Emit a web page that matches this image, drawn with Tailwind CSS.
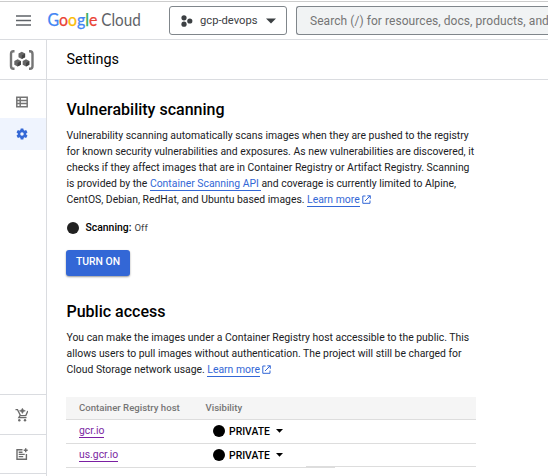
<!DOCTYPE html>
<html lang="en">
<head>
<meta charset="utf-8">
<title>Settings – Container Registry</title>
<script src="https://cdn.jsdelivr.net/npm/@tailwindcss/browser@4"></script>
</head>
<body class="w-[548px] h-[476px] overflow-hidden bg-white font-['Roboto',sans-serif] text-[#202124] text-[10.4px] leading-4 flex flex-col">
<header class="h-[40px] shrink-0 border-b border-[#dadce0] flex flex-col">
  <div class="h-[2px] shrink-0 border-b border-[#cccccc]"></div>
  <div class="flex items-center h-[37px] pl-[16px]">
    <svg class="w-[15px] h-[11px] shrink-0" viewBox="0 0 15 11"><path d="M0 1h15M0 5.500h15M0 10h15" stroke="#5f6368" stroke-width="1.600"/></svg>
    <svg class="ml-[16px] w-[100px] h-[24px] shrink-0" viewBox="0 0 100 24" font-family="Lato, sans-serif" font-size="16.500"><text x="0.500" y="16.500" textLength="50" lengthAdjust="spacingAndGlyphs" stroke-width=".25"><tspan fill="#4285f4" stroke="#4285f4">G</tspan><tspan fill="#ea4335" stroke="#ea4335">o</tspan><tspan fill="#fbbc04" stroke="#fbbc04">o</tspan><tspan fill="#4285f4" stroke="#4285f4">g</tspan><tspan fill="#34a853" stroke="#34a853">l</tspan><tspan fill="#ea4335" stroke="#ea4335">e</tspan></text><text x="54.300" y="16.500" textLength="39.500" lengthAdjust="spacingAndGlyphs" fill="#5f6368">Cloud</text></svg>
    <button class="ml-[22px] w-[118px] h-[29px] shrink-0 rounded-[3px] border border-[#80868b] flex items-center pl-[10.500px] text-[11.2px] text-[#3c4043]">
      <svg class="w-[12px] h-[12px]" viewBox="0 0 12 12" fill="#3c4043"><circle cx="3" cy="2.800" r="2.600"/><circle cx="3" cy="9.200" r="2.600"/><circle cx="8.800" cy="6" r="2.600"/></svg>
      <span class="ml-[7.500px] w-[58px] text-left whitespace-nowrap">gcp-devops</span>
      <svg class="ml-[7.500px] w-[10px] h-[6px]" viewBox="0 0 10 6"><path d="M0 .5h10L5 5.500z" fill="#3c4043"/></svg>
    </button>
    <div class="ml-[9px] flex-1 min-w-0 overflow-hidden h-[29px] rounded-l-[3px] border border-r-0 border-[#80868b] bg-[#f1f3f4] flex items-center pl-[13px] text-[12px] tracking-[0.06px] text-[#757575] whitespace-nowrap">Search (/) for resources, docs, products, and</div>
  </div>
</header>
<div class="flex flex-1 min-h-0">
  <aside class="w-[47px] shrink-0 border-r border-[#dadce0] flex flex-col">
    <div class="h-[40px] border-b border-[#dadce0] flex items-center justify-center shrink-0">
      <svg class="w-[26px] h-[20px] mr-[3px]" viewBox="0 0 26 20"><path d="M5.500 1.300H4.500Q2 1.300 2 4v12q0 2.700 2.500 2.700h1M20 1.300h1q2.500 0 2.500 2.700v12q0 2.700-2.500 2.700h-1" fill="none" stroke="#757575" stroke-width="2.400"/><path d="M12.800 1.800l3.300 1.800v3.600l-3.300 1.800-3.300-1.800V3.600zM8.600 9.300l3.300 1.800v3.600l-3.300 1.800-3.300-1.800v-3.600zM17 9.300l3.300 1.800v3.600L17 16.500l-3.300-1.800v-3.600z" fill="#666666"/><path d="M12.800 5.400V9l3.300-1.800V3.600zM8.600 12.900v3.600l3.300-1.800v-3.600zM17 12.900v3.600l3.300-1.800v-3.600z" fill="#424242"/></svg>
    </div>
    <div class="h-[38px] shrink-0 flex items-end justify-center pr-[3px] pb-[10px]">
      <svg class="w-[12px] h-[12px]" viewBox="0 0 12 12" fill="none" stroke="#757575" stroke-width="1.500"><path d="M.8 1.200h10.400v9.600H.8zM4.200 1v10M.5 4.400h11M.5 7.600h11"/></svg>
    </div>
    <div class="h-[32px] shrink-0 bg-[#eff4fe] flex items-center justify-center pr-[3px]">
      <svg class="w-[14px] h-[14px]" viewBox="0 0 24 24" fill="#3367d6"><path d="M19.140 12.940c.04-.3.060-.61.060-.94s-.02-.64-.07-.94l2.030-1.580a.49.49 0 0 0 .12-.61l-1.920-3.320a.49.49 0 0 0-.59-.22l-2.390.96a7 7 0 0 0-1.620-.94l-.36-2.540a.48.48 0 0 0-.48-.41h-3.840a.48.48 0 0 0-.47.41l-.36 2.540a7.200 7.200 0 0 0-1.620.94l-2.390-.96a.49.49 0 0 0-.59.22L2.740 8.870a.48.48 0 0 0 .12.610l2.030 1.580a6 6 0 0 0 0 1.880l-2.030 1.580a.49.49 0 0 0-.12.610l1.920 3.320c.12.220.37.290.59.220l2.390-.96c.5.380 1.030.7 1.620.94l.36 2.540c.05.240.24.410.48.410h3.840c.24 0 .44-.17.470-.41l.36-2.540a7.200 7.200 0 0 0 1.620-.94l2.390.96c.22.080.47 0 .59-.22l1.920-3.320a.48.48 0 0 0-.12-.61zM12 15a3 3 0 1 1 0-6 3 3 0 0 1 0 6z"/></svg>
    </div>
    <div class="flex-1 border-b border-[#dadce0]"></div>
    <div class="h-[40px] shrink-0 border-b border-[#dadce0] flex items-center justify-center pr-[3px]">
      <svg class="w-[13px] h-[14px]" viewBox="0 0 13 14" fill="none" stroke="#6b6b6b" stroke-width="1.300"><path d="M.5 1.600h2l3 6h5.300l2-4.600M5 7.700l-1.200 2h7.700"/><circle cx="4.300" cy="12.200" r="1.200" fill="#6b6b6b" stroke="none"/><circle cx="10" cy="12.200" r="1.200" fill="#6b6b6b" stroke="none"/><path d="M7.400.2l1 1.700 2 .9-2 .9-1 1.800-1-1.800-2-.9 2-.9z" fill="#6b6b6b" stroke="#6b6b6b" stroke-width=".5"/></svg>
    </div>
    <div class="h-[39px] shrink-0 border-b border-[#dadce0] flex items-center justify-center pr-[3px]">
      <svg class="w-[12px] h-[12px]" viewBox="0 0 12 12" fill="none" stroke="#6b6b6b" stroke-width="1.400"><path d="M6.500 1.700H1v9.500h9.400V6M2.700 4.300h3.800M2.700 6.400h6M2.700 8.600h4.500M9.700.2v4M7.700 2.200h4"/></svg>
    </div>
    <div class="h-[2px] shrink-0"></div>
  </aside>
  <main class="flex-1 min-w-0 flex flex-col">
    <div class="h-[40px] shrink-0 border-b border-[#dadce0] flex items-center pl-[19.5px] text-[14.4px] text-black">Settings</div>
    <div class="pl-[19px] pt-[19px] whitespace-nowrap">
      <h1 class="pl-[0.5px] text-[16px] leading-[22px] font-medium text-black">Vulnerability scanning</h1>
      <p class="pl-[0.5px] mt-[7px] h-[80px]">Vulnerability scanning automatically scans images when they are pushed to the registry<br>for known security vulnerabilities and exposures. As new vulnerabilities are discovered, it<br>checks if they affect images that are in Container Registry or Artifact Registry. Scanning<br>is provided by the <a class="text-[#3367d6] border-b border-[#3367d6]">Container Scanning API </a>and coverage is currently limited to Alpine,<br>CentOS, Debian, RedHat, and Ubuntu based images. <a class="text-[#3367d6] border-b border-[#3367d6]">Learn more</a> <svg class="inline align-[-1px] w-[9px] h-[9px]" viewBox="0 0 9 9" fill="none" stroke="#3367d6"><path d="M3.500 1H.8v7.300H8V5.500M5.300.8h3v3M8.200.8L3 6"/></svg></p>
      <div class="mt-[12px] h-[16px] flex items-center"><span class="ml-[1px] size-[12px] rounded-full bg-[#212121]"></span><b class="ml-[6.500px] font-medium text-black">Scanning:</b><span class="ml-[3px] text-[9.6px] text-[#444444]">Off</span></div>
      <button class="mt-[14px] block w-[64px] h-[26px] pb-[2px] rounded-[3px] bg-[#3367d6] text-white font-medium shadow-[0_1px_2px_rgba(0,0,0,0.4)]">TURN ON</button>
      <h2 class="pl-[0.5px] mt-[25px] text-[16px] leading-[22px] font-medium text-black">Public access</h2>
      <p class="pl-[0.5px] mt-[7px] h-[48px]">You can make the images under a Container Registry host accessible to the public. This<br>allows users to pull images without authentication. The project will still be charged for<br>Cloud Storage network usage. <a class="text-[#3367d6] border-b border-[#3367d6]">Learn more</a><svg class="ml-[2px] inline align-[-1px] w-[9px] h-[9px]" viewBox="0 0 9 9" fill="none" stroke="#3367d6"><path d="M3.500 1H.8v7.300H8V5.500M5.300.8h3v3M8.200.8L3 6"/></svg></p>
      <div class="mt-[19px] w-[410px]">
        <div class="h-[23px] bg-[#f5f5f5] border-b border-[#dddddd] flex items-center pl-[13px] text-[9.6px] font-medium text-[#757575]"><span class="w-[126.500px]">Container Registry host</span><span>Visibility</span></div>
        <div class="h-[24px] border-b border-[#dddddd] flex items-center pl-[13px] pb-px"><span class="w-[134px]"><a class="text-[#7b1fa2] border-b border-[#7b1fa2]">gcr.io</a></span><span class="size-[12px] rounded-full bg-black"></span><b class="ml-[4px] pt-px w-[41px] font-medium text-black">PRIVATE</b><svg class="ml-[6px] w-[7px] h-[4px]" viewBox="0 0 7 4"><path d="M0 0h7L3.500 3.800z"/></svg></div>
        <div class="h-[22px] flex items-center pl-[13px]"><span class="w-[134px]"><a class="text-[#7b1fa2] border-b border-[#7b1fa2]">us.gcr.io</a></span><span class="size-[12px] rounded-full bg-black"></span><b class="ml-[4px] pt-px w-[41px] font-medium text-black">PRIVATE</b><svg class="ml-[6px] w-[7px] h-[4px]" viewBox="0 0 7 4"><path d="M0 0h7L3.500 3.800z"/></svg></div>
        <div class="ml-[240px] h-px bg-[#dddddd]"></div>
        <div class="w-[269px] h-px bg-[#dddddd]"></div>
      </div>
    </div>
  </main>
</div>
</body>
</html>
